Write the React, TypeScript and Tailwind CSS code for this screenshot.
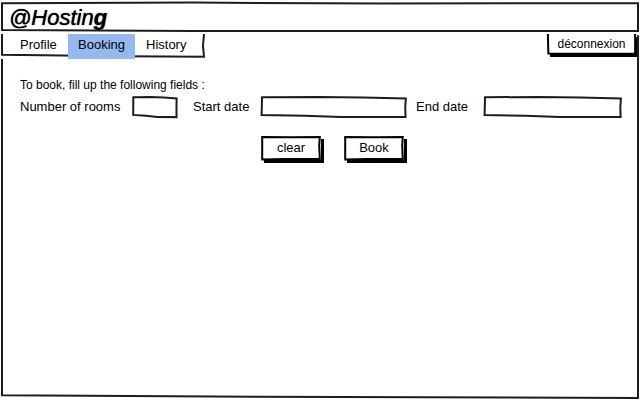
import React from "react";

type StrokeProps = { d: string; width?: number; className?: string };

// Hand-drawn outline that stretches with the box it decorates.
function Sketch({ d, width = 2, className = "text-[#1c1c22]" }: StrokeProps) {
  return (
    <svg
      aria-hidden="true"
      viewBox="0 0 100 100"
      preserveAspectRatio="none"
      className={`pointer-events-none absolute inset-0 h-full w-full overflow-visible ${className}`}
    >
      <path d={d} fill="none" stroke="currentColor" strokeWidth={width} vectorEffect="non-scaling-stroke" />
    </svg>
  );
}

const FIELD = "M0.7 6 L40 4 L70 7 L99.2 11 L98.8 50 L99 96 L55 95 L30 90 L0.4 86 L0.6 45 Z";
const BUTTON = "M2 4 L50 5 L98 4 L97 40 L98 96 L40 96 L2 98 L2 50 Z";

function Field({ id, label, pad, type = "text" }: { id: string; label: string; pad: string; type?: string }) {
  return (
    <>
      <label htmlFor={id} className={pad}>
        {label}
      </label>
      <div className="relative h-[22px]">
        <input id={id} type={type} className="h-full w-full bg-transparent px-2 outline-none" />
        <Sketch d={FIELD} />
      </div>
    </>
  );
}

function SketchButton({ children, type }: { children: React.ReactNode; type: "reset" | "submit" }) {
  return (
    <button type={type} className="relative mr-[3px] h-6 w-[60px] bg-white shadow-[3px_3px_0_#000]">
      {children}
      <Sketch d={BUTTON} className="text-black" />
    </button>
  );
}

export default function App() {
  return (
    <div className="relative flex min-h-screen flex-col bg-white font-['Liberation_Sans',sans-serif] text-[13px] leading-4 text-black">
      <header className="relative mx-0.5 mt-0.5 flex h-[30px] items-center pt-0.5 pl-[7px]">
        <h1 className="text-[22px] leading-7 italic [text-shadow:0_0_1px_black]">
          @Hostin<span className="font-bold">g</span>
        </h1>
        <Sketch d="M0 4 L30 2 L60 5 L100 4 L100 97 L60 97 L30 97 L0 93 Z" />
      </header>

      <div className="mt-0.5 flex h-[25px] items-start justify-between pl-0.5">
        <nav className="relative flex h-[23px]">
          <Sketch d="M0 0 L0 90 L30 94 L60 97 L100 99 L99.5 50 L100 0" />
          <a href="#profile" className="relative w-[66px] pt-[3px] pl-[18px]">
            Profile
          </a>
          <a href="#booking" aria-current="page" className="relative h-[25px] w-[67px] bg-[#94b8f0] pt-[3px] text-center">
            Booking
          </a>
          <a href="#history" className="relative w-[69px] pt-[3px] pl-[11px]">
            History
          </a>
        </nav>
        <button type="button" className="relative mr-1 h-5 w-[89px] bg-white text-xs shadow-[3px_3px_0_#000]">
          déconnexion
          <Sketch d="M1 0 L1.5 98 L50 99 L99 98 L99 0" className="text-black" />
        </button>
      </div>

      <main className="relative mx-0.5 mb-0.5 flex-1 pt-[18px] pr-4 pl-[18px]">
        <Sketch d="M0 0 L0 99.2 L40 99.6 L100 100 L100 -7" />
        <form className="relative">
          <p className="text-xs">To book, fill up the following fields :</p>
          <div className="mt-[3px] grid grid-cols-[113px_44px_84px_146px_77px_1fr] items-center">
            <Field id="rooms" label="Number of rooms" pad="pl-0" />
            <Field id="start" label="Start date" pad="pl-4" />
            <Field id="end" label="End date" pad="pl-[9px]" />
            <div className="col-start-4 mt-[18px] flex justify-between">
              <SketchButton type="reset">clear</SketchButton>
              <SketchButton type="submit">Book</SketchButton>
            </div>
          </div>
        </form>
      </main>
    </div>
  );
}
